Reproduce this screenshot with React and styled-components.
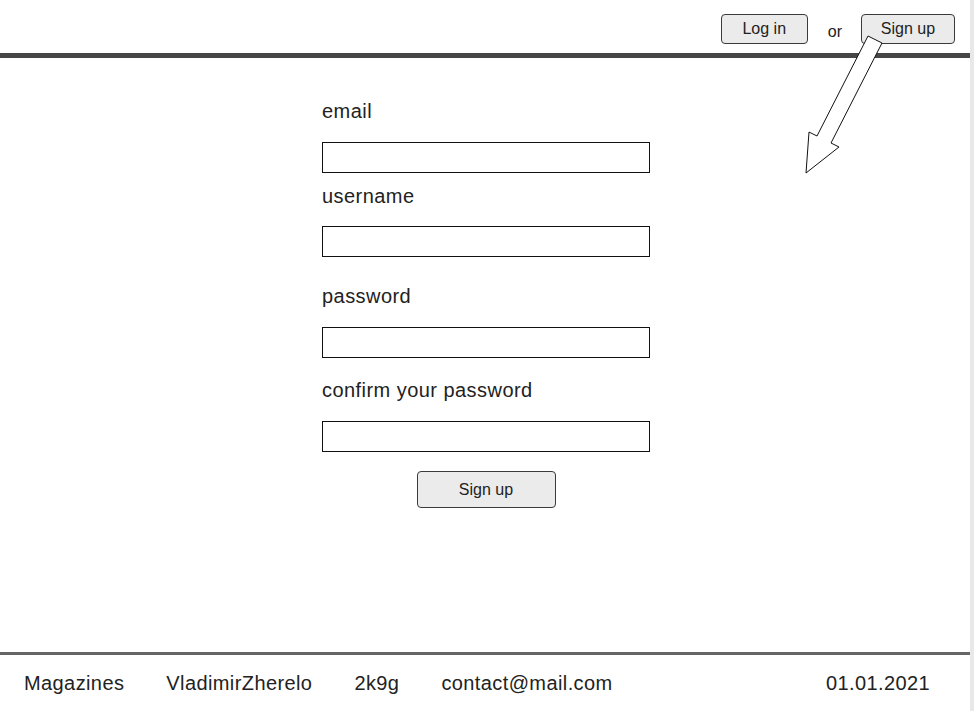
import React from 'react';
import styled, { createGlobalStyle } from 'styled-components';

const GlobalStyle = createGlobalStyle`
  html, body {
    margin: 0;
    padding: 0;
    background: #ffffff;
  }
  body {
    font-family: 'Liberation Sans', Arial, sans-serif;
    color: #222222;
  }
  * {
    box-sizing: border-box;
  }
`;

const Page = styled.div`
  position: relative;
  display: flex;
  flex-direction: column;
  width: 974px;
  height: 711px;
  border-right: 4px solid #e8e8e8;
  overflow: hidden;
`;

const Header = styled.header`
  display: flex;
  justify-content: flex-end;
  align-items: flex-start;
  height: 53px;
  padding: 14px 15px 0 0;
`;

const SmallButton = styled.button`
  width: ${(p) => p.width}px;
  height: 30px;
  padding: 0;
  font-family: 'Liberation Sans', Arial, sans-serif;
  font-size: 16px;
  color: #222;
  background: #ebebeb;
  border: 1px solid #3a3a3a;
  border-radius: 4px;
  cursor: pointer;
`;

const Or = styled.span`
  margin: 9px 19px 0 20px;
  font-size: 16px;
  line-height: 18px;
  color: #222;
`;

const Rule = styled.div`
  height: 5px;
  background: #464646;
`;

const Main = styled.main`
  flex: 1;
  display: flex;
  justify-content: center;
`;

const Form = styled.form`
  width: 328px;
  margin-left: 2px;
  display: flex;
  flex-direction: column;
  padding-top: 40px;
`;

const Field = styled.div`
  display: flex;
  flex-direction: column;
  margin-top: ${(p) => p.top}px;
`;

const Label = styled.label`
  padding-top: 2px;
  font-size: 20px;
  line-height: 23px;
  letter-spacing: 0.45px;
  color: #222;
  margin-bottom: ${(p) => p.gap}px;
`;

const Input = styled.input`
  width: 328px;
  height: 31px;
  border: 1px solid #111;
  background: #fff;
  outline: none;
  font-size: 16px;
  padding: 0 6px;
`;

const SubmitButton = styled.button`
  align-self: center;
  width: 139px;
  height: 37px;
  margin-top: 19px;
  padding: 0;
  font-family: 'Liberation Sans', Arial, sans-serif;
  font-size: 16px;
  color: #222;
  background: #ebebeb;
  border: 1px solid #3a3a3a;
  border-radius: 4px;
  cursor: pointer;
`;

const Footer = styled.footer`
  display: flex;
  align-items: center;
  height: 59px;
  padding: 0 40px 0 24px;
  border-top: 3px solid #666666;
  font-size: 20px;
  letter-spacing: 0.4px;
  color: #222;
`;

const FooterItem = styled.span`
  margin-right: 42px;
`;

const FooterDate = styled.span`
  margin-left: auto;
`;

const Arrow = styled.svg`
  position: absolute;
  left: 800px;
  top: 30px;
  width: 90px;
  height: 150px;
  pointer-events: none;
  overflow: visible;
`;

const fields = [
  { label: 'email', top: 0, gap: 19, type: 'email' },
  { label: 'username', top: 10, gap: 18, type: 'text' },
  { label: 'password', top: 26, gap: 19, type: 'password' },
  { label: 'confirm your password', top: 19, gap: 19, type: 'password' },
];

export default function App() {
  return (
    <>
      <GlobalStyle />
      <Page>
        <Header>
          <SmallButton width={87}>Log in</SmallButton>
          <Or>or</Or>
          <SmallButton width={94}>Sign up</SmallButton>
        </Header>
        <Rule />
        <Main>
          <Form onSubmit={(e) => e.preventDefault()}>
            {fields.map((f) => (
              <Field key={f.label} top={f.top}>
                <Label gap={f.gap}>{f.label}</Label>
                <Input type={f.type} />
              </Field>
            ))}
            <SubmitButton type="submit">Sign up</SubmitButton>
          </Form>
        </Main>
        <Footer>
          <FooterItem>Magazines</FooterItem>
          <FooterItem>VladimirZherelo</FooterItem>
          <FooterItem>2k9g</FooterItem>
          <FooterItem>contact@mail.com</FooterItem>
          <FooterDate>01.01.2021</FooterDate>
        </Footer>
        <Arrow viewBox="0 0 90 150">
          <polygon
            points="68,6 82,13 31,113 39,117 6,143 9,102 17,106"
            fill="#ffffff"
            stroke="#111111"
            strokeWidth="1"
            strokeLinejoin="miter"
          />
        </Arrow>
      </Page>
    </>
  );
}
